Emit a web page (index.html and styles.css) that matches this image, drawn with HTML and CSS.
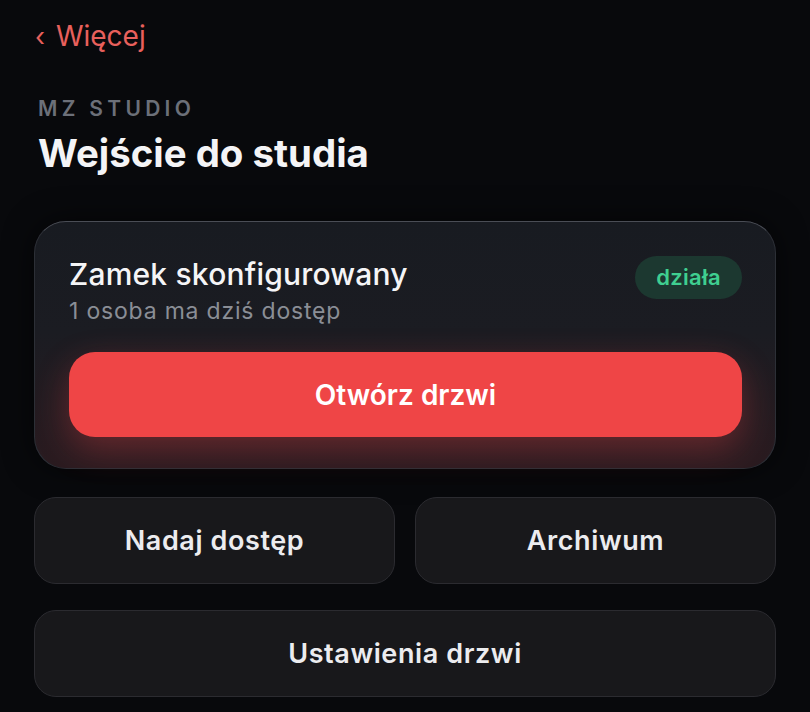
FILE: index.html
```html
<!DOCTYPE html>
<html lang="pl">
<head>
    <meta charset="UTF-8">
    <title>Wejście do studia</title>
    <link rel="stylesheet" href="styles.css">
</head>
<body>
    <div class="page">
        <a class="back" href="#"><span class="chev">‹</span> Więcej</a>

        <p class="eyebrow">MZ STUDIO</p>
        <h1>Wejście do studia</h1>

        <div class="lock-card">
            <div class="lock-head">
                <div>
                    <p class="lock-title">Zamek skonfigurowany</p>
                    <p class="lock-sub">1 osoba ma dziś dostęp</p>
                </div>
                <span class="badge">działa</span>
            </div>
            <button class="open-btn">Otwórz drzwi</button>
        </div>

        <div class="actions">
            <button class="action">Nadaj dostęp</button>
            <button class="action">Archiwum</button>
            <button class="action wide">Ustawienia drzwi</button>
        </div>
    </div>
</body>
</html>
```

FILE: styles.css
```css
* {
    box-sizing: border-box;
}
html, body {
    margin: 0;
    background: #08090c;
}
body {
    font-family: Inter, "Noto Sans", sans-serif;
    color: #f4f4f6;
}
.page {
    padding: 18px 34px 0 34px;
}
.back {
    display: inline-block;
    color: #e8605c;
    text-decoration: none;
    font-size: 28px;
    line-height: 36px;
    padding-left: 1px;
}
.chev {
    font-size: 26px;
    margin-right: 3px;
}
.eyebrow {
    margin: 41px 0 0 4px;
    font-size: 21px;
    line-height: 26px;
    font-weight: 600;
    letter-spacing: 4.3px;
    color: #6c7079;
}
h1 {
    margin: 8px 0 0 4px;
    font-size: 38.4px;
    line-height: 46px;
    font-weight: 700;
}
.lock-card {
    margin-top: 45px;
    border-radius: 32px;
    padding: 34px 33px 31px 34px;
    background: linear-gradient(180deg, #181b21 0%, #1b1c22 45%, #2a1b20 100%);
    border: 1px solid #2c2f36;
    border-top-color: #4a4d55;
    box-shadow: 0 0 30px rgba(0, 0, 0, 0.6);
}
.lock-head {
    display: flex;
    justify-content: space-between;
    align-items: flex-start;
}
.lock-title {
    margin: 0;
    font-size: 30px;
    line-height: 36px;
    font-weight: 500;
    letter-spacing: 0.2px;
    color: #f5f5f7;
}
.lock-sub {
    margin: 5px 0 0 0;
    font-size: 23px;
    line-height: 28px;
    letter-spacing: 0.8px;
    color: #8a8e96;
}
.badge {
    padding: 8px 21px;
    border-radius: 22px;
    background: #1c3830;
    color: #3fcf90;
    font-size: 22px;
    line-height: 27px;
    font-weight: 600;
    letter-spacing: 0.3px;
}
.open-btn {
    display: block;
    width: 100%;
    margin-top: 27px;
    height: 85px;
    border: none;
    border-radius: 26px;
    background: #ef4546;
    color: #fff;
    font-family: inherit;
    font-size: 28px;
    font-weight: 600;
    box-shadow: 0 12px 34px rgba(239, 69, 70, 0.32);
}
.actions {
    display: grid;
    grid-template-columns: 1fr 1fr;
    column-gap: 20px;
    row-gap: 26px;
    margin-top: 28px;
}
.action {
    height: 87px;
    border-radius: 22px;
    background: #18181b;
    border: 1px solid #2b2b30;
    color: #ececef;
    font-family: inherit;
    font-size: 27px;
    font-weight: 600;
    letter-spacing: 0.6px;
}
.action.wide {
    grid-column: 1 / 3;
}
```
